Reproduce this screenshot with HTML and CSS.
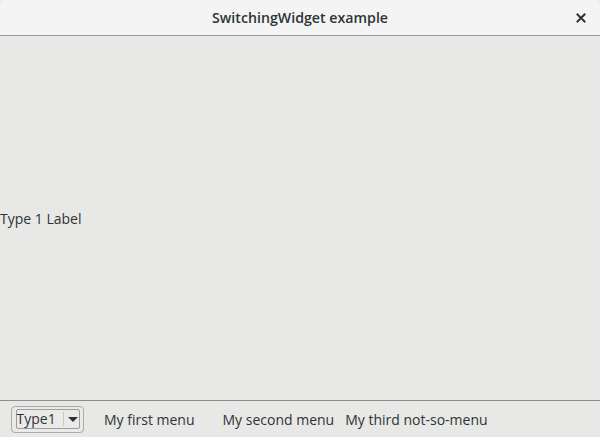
FILE: index.html
```html
<!DOCTYPE html>
<html>
<head>
<meta charset="utf-8">
<link rel="stylesheet" href="styles.css">
</head>
<body>
<div class="window">
  <header class="titlebar">
    <div class="title">SwitchingWidget example</div>
    <div class="close">
      <svg width="10" height="10" viewBox="0 0 10 10"><path d="M1.5 1.5 L8.5 8.5 M8.5 1.5 L1.5 8.5" stroke="#2e3436" stroke-width="2" stroke-linecap="square"/></svg>
    </div>
  </header>
  <main class="content">
    <div class="label">Type 1 Label</div>
  </main>
  <footer class="bottombar">
    <div class="combo">
      <div class="combo-inner">
        <span class="combo-text">Type1</span>
        <span class="combo-sep"></span>
        <span class="combo-arrow"></span>
      </div>
    </div>
    <span class="menu m1">My first menu</span>
    <span class="menu m2">My second menu</span>
    <span class="menu m3">My third not-so-menu</span>
  </footer>
</div>
</body>
</html>
```
FILE: styles.css
```css
html, body {
  margin: 0;
  padding: 0;
  background: #e8e8e7;
}
.window {
  width: 600px;
  height: 437px;
  display: flex;
  flex-direction: column;
  font-family: "Open Sans", "Noto Sans", sans-serif;
  color: #2e3436;
  overflow: hidden;
}
.titlebar {
  height: 35px;
  flex: none;
  background: #f4f4f4;
  border-bottom: 1px solid #9a9a98;
  border-radius: 4px 4px 0 0;
  display: flex;
  align-items: center;
  justify-content: center;
  position: relative;
}
.title {
  font-family: "Open Sans", sans-serif;
  font-weight: 600;
  font-size: 14.2px;
  color: #2e3436;
}
.close {
  position: absolute;
  right: 14px;
  top: 13px;
  width: 10px;
  height: 10px;
  display: flex;
}
.content {
  flex: 1;
  display: flex;
  align-items: center;
}
.label {
  font-size: 14px;
  color: #2e3436;
}
.bottombar {
  height: 36px;
  flex: none;
  border-top: 1px solid #8e8e8c;
  display: flex;
  align-items: center;
  font-size: 14px;
}
.combo {
  margin-left: 11px;
  width: 71px;
  height: 25px;
  border: 1px solid #aaaaa8;
  border-radius: 4px;
  background: #eaeae9;
  display: flex;
  align-items: center;
  justify-content: center;
  box-sizing: content-box;
}
.combo-inner {
  width: 62px;
  height: 18px;
  border: 1px solid #9d9d9b;
  border-radius: 2px;
  display: flex;
  align-items: center;
}
.combo-text {
  width: 46px;
  line-height: 18px;
}
.combo-sep {
  width: 1px;
  height: 14px;
  background: #c8c8c6;
}
.combo-arrow {
  margin-left: 4px;
  width: 0;
  height: 0;
  border-left: 5px solid transparent;
  border-right: 5px solid transparent;
  border-top: 5px solid #2e3436;
}
.menu {
  white-space: nowrap;
}
.m1 { margin-left: 20px; }
.m2 { margin-left: 28px; }
.m3 { margin-left: 11px; }
```
